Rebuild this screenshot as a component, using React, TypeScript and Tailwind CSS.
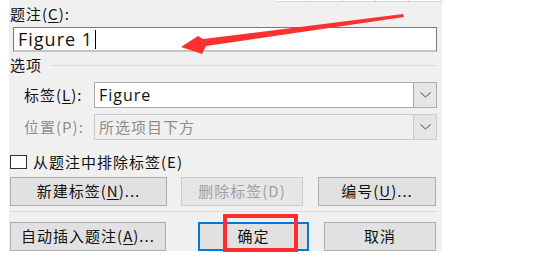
import React from "react";

const cjk = { fontFamily: '"Microsoft YaHei", "Noto Sans CJK SC", "Noto Sans", sans-serif' } as React.CSSProperties;

function Chevron() {
  return (
    <svg width="11" height="6" viewBox="0 0 11 6" fill="none">
      <path d="M0.5 0.5 L5.5 5 L10.5 0.5" stroke="#444" strokeWidth="1" />
    </svg>
  );
}

function Btn({ children, disabled, className = "" }: { children: React.ReactNode; disabled?: boolean; className?: string }) {
  return (
    <div
      className={
        "flex items-center justify-center h-[29px] border bg-[#e1e1e1] text-[15px] tracking-[1px] " +
        (disabled ? "border-[#cccccc] text-[#a0a0a0] bg-[#e6e6e6] " : "border-[#adadad] text-[#111] ") +
        className
      }
    >
      {children}
    </div>
  );
}

export default function App() {
  return (
    <div className="relative w-[551px] h-[278px] bg-white overflow-hidden" style={cjk}>
      <div className="ml-[9px] w-[433px] h-[251px] bg-[#f0f0f0] pl-[1px] pr-[5px] pt-[5px] flex flex-col text-[#111]">
        <div className="h-[18px] text-[15px] leading-[18px] tracking-[1px]">
          题注(<span className="underline underline-offset-2">C</span>):
        </div>
        <div className="mt-[4px] ml-[3px] h-[25px] bg-white border border-[#7a7a7a] border-b-[#c4c4c4] border-b-2 flex items-center pl-[4px]">
          <span className="text-[18px] tracking-[1px] leading-none" style={{ fontFamily: '"Open Sans", "Noto Sans", sans-serif' }}>Figure 1</span>
          <span className="ml-[2px] w-[1px] h-[19px] bg-black" />
        </div>
        <div className="mt-[5px] h-[16px] flex items-center">
          <span className="text-[15px] tracking-[1px] leading-[16px]">选项</span>
          <div className="ml-[8px] flex-1 h-[1px] bg-[#dcdcdc]" />
        </div>
        <div className="mt-[9px] flex items-center h-[26px]">
          <span className="ml-[14px] w-[70px] text-[15px] tracking-[1px]">
            标签(<span className="underline underline-offset-2">L</span>):
          </span>
          <div className="flex-1 h-[26px] bg-white border border-[#acacac] flex items-center justify-between">
            <span className="pl-[4px] text-[16px] tracking-[1px]" style={{ fontFamily: '"Open Sans", "Noto Sans", sans-serif' }}>Figure</span>
            <div className="w-[23px] h-[24px] bg-[#e5e5e5] border-l border-[#acacac] flex items-center justify-center">
              <Chevron />
            </div>
          </div>
        </div>
        <div className="mt-[6px] flex items-center h-[26px]">
          <span className="ml-[14px] w-[70px] text-[15px] tracking-[1px] text-[#8d8d8d]">位置(P):</span>
          <div className="flex-1 h-[26px] bg-[#f0f0f0] border border-[#cccccc] flex items-center justify-between">
            <span className="pl-[4px] text-[15px] tracking-[1px] text-[#8d8d8d]">所选项目下方</span>
            <div className="w-[23px] h-[24px] bg-[#e5e5e5] border-l border-[#cccccc] flex items-center justify-center">
              <Chevron />
            </div>
          </div>
        </div>
        <div className="mt-[14px] flex items-center h-[16px]">
          <div className="w-[17px] h-[14px] bg-white border border-[#333]" />
          <span className="ml-[6px] text-[15px] tracking-[1px]">
            从题注中排除标签(E)
          </span>
        </div>
        <div className="mt-[7px] flex h-[29px]">
          <Btn className="w-[157px]">
            新建标签(<span className="underline underline-offset-2">N</span>)...
          </Btn>
          <Btn disabled className="ml-[14px] w-[122px]">删除标签(D)</Btn>
          <Btn className="ml-[15px] w-[118px]">
            编号(<span className="underline underline-offset-2">U</span>)...
          </Btn>
        </div>
        <div className="mt-[5px] h-[1px] bg-[#dcdcdc]" />
        <div className="mt-[10px] flex h-[29px] items-center">
          <Btn className="w-[156px]">
            自动插入题注(<span className="underline underline-offset-2">A</span>)...
          </Btn>
          <Btn className="ml-[32px] w-[111px] !border-[#0078d7] !border-2">确定</Btn>
          <Btn className="ml-[15px] w-[112px]">取消</Btn>
        </div>
      </div>

      {/* document grid behind, top right */}
      <div className="absolute left-[277px] top-0 w-[165px] h-[2px] bg-white border-b border-[#d8d8d8] flex">
        <div className="w-[33px] border-r border-[#d8d8d8]" />
        <div className="w-[33px] border-r border-[#d8d8d8]" />
        <div className="w-[33px] border-r border-[#d8d8d8]" />
        <div className="w-[33px] border-r border-[#d8d8d8]" />
        <div className="w-[33px] border-r border-[#d8d8d8]" />
      </div>

      {/* red annotation rectangle */}
      <div className="absolute left-[223px] top-[214px] w-[75px] h-[38px] border-4 border-[#ff2d2d]" />

      {/* red arrow */}
      <svg className="absolute left-0 top-0" width="551" height="278" viewBox="0 0 551 278">
        <polygon
          points="181,47 198,36 203,39 403,14 404,17 206,46 202,54"
          fill="#ff3030"
        />
      </svg>
    </div>
  );
}
